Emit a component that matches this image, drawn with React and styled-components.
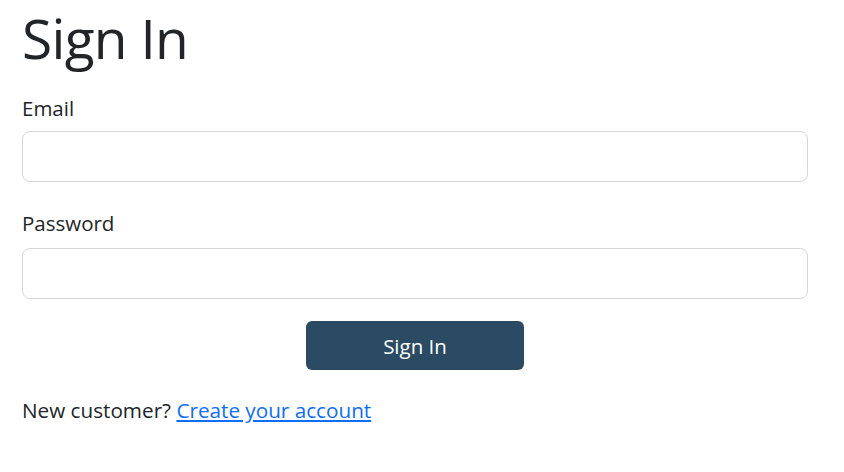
import React from 'react'
import styled, { createGlobalStyle } from 'styled-components'

const GlobalStyle = createGlobalStyle`
  body {
    margin: 0;
    background: #ffffff;
    font-family: "Open Sans", "Noto Sans", sans-serif;
    color: #212529;
  }
`

const Page = styled.div`
  padding: 0 0 0 22px;
  width: 786px;
`

const Title = styled.h1`
  margin: 0 0 20px;
  font-size: 55px;
  font-weight: 400;
  line-height: 75px;
  letter-spacing: -0.7px;
`

const Form = styled.form`
  display: flex;
  flex-direction: column;
`

const Field = styled.div`
  display: flex;
  flex-direction: column;
  margin-bottom: ${(p) => p.gap || 0}px;
`

const Label = styled.label`
  font-size: 20.5px;
  line-height: 26px;
  margin-bottom: ${(p) => p.space || 10}px;
`

const Input = styled.input`
  box-sizing: border-box;
  height: 51px;
  width: 100%;
  border: 1px solid #d3d7db;
  border-radius: 8px;
  padding: 0 14px;
  font-size: 19px;
  font-family: inherit;
  outline: none;
`

const Actions = styled.div`
  display: flex;
  justify-content: center;
  margin-top: 22px;
`

const Button = styled.button`
  width: 218px;
  height: 49px;
  border: none;
  border-radius: 6px;
  background: #2a4b63;
  color: #ffffff;
  font-size: 20.5px;
  font-family: inherit;
  cursor: pointer;
`

const Footer = styled.p`
  margin: 27px 0 0;
  font-size: 20.7px;
  line-height: 26px;
`

const Link = styled.a`
  color: #0d6efd;
  text-decoration: underline;
`

const App = () => {
  return (
    <>
      <GlobalStyle />
      <Page>
        <Title>Sign In</Title>
        <Form onSubmit={(e) => e.preventDefault()}>
          <Field gap={28}>
            <Label htmlFor="email">Email</Label>
            <Input id="email" type="email" />
          </Field>
          <Field>
            <Label htmlFor="password" space={12}>Password</Label>
            <Input id="password" type="password" />
          </Field>
          <Actions>
            <Button type="submit">Sign In</Button>
          </Actions>
        </Form>
        <Footer>
          New customer? <Link href="#">Create your account</Link>
        </Footer>
      </Page>
    </>
  )
}

export default App
